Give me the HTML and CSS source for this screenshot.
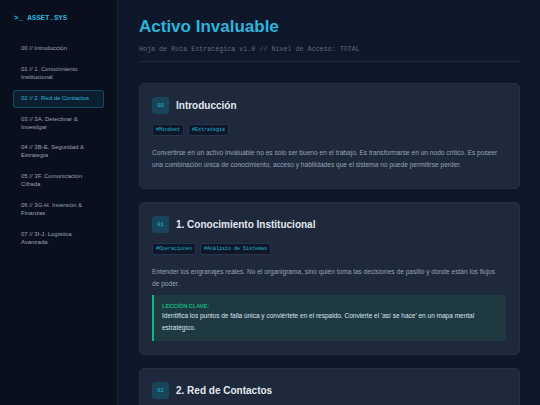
FILE: index.html
```html
<!DOCTYPE html>
<html lang="es">
<head>
<meta charset="utf-8">
<title>Activo Invaluable</title>
<link rel="stylesheet" href="styles.css">
</head>
<body>
<div class="app">
  <aside class="sidebar">
    <div class="logo">&gt;_ ASSET.SYS</div>
    <nav class="nav">
      <a class="nav-item">00 // Introducción</a>
      <a class="nav-item">01 // 1. Conocimiento Institucional</a>
      <a class="nav-item active">02 // 2. Red de Contactos</a>
      <a class="nav-item">03 // 3A. Detectivar &amp; Investigar</a>
      <a class="nav-item">04 // 3B-E. Seguridad &amp; Estrategia</a>
      <a class="nav-item">05 // 3F. Comunicación Cifrada</a>
      <a class="nav-item">06 // 3G-H. Inversión &amp; Finanzas</a>
      <a class="nav-item">07 // 3I-J. Logística Avanzada</a>
    </nav>
  </aside>
  <main class="main">
    <header class="page-header">
      <h1 class="page-title">Activo Invaluable</h1>
      <div class="page-sub">Hoja de Ruta Estratégica v1.0 // Nivel de Acceso: TOTAL</div>
    </header>
    <section class="card">
      <div class="card-head">
        <span class="badge">00</span>
        <h2 class="card-title">Introducción</h2>
      </div>
      <div class="tags">
        <span class="tag">#Mindset</span>
        <span class="tag">#Estrategia</span>
      </div>
      <p class="card-text">Convertirse en un activo invaluable no es solo ser bueno en el trabajo. Es transformarse en un nodo crítico. Es poseer una combinación única de conocimiento, acceso y habilidades que el sistema no puede permitirse perder.</p>
    </section>
    <section class="card">
      <div class="card-head">
        <span class="badge">01</span>
        <h2 class="card-title">1. Conocimiento Institucional</h2>
      </div>
      <div class="tags">
        <span class="tag">#Operaciones</span>
        <span class="tag">#Análisis de Sistemas</span>
      </div>
      <p class="card-text">Entender los engranajes reales. No el organigrama, sino quién toma las decisiones de pasillo y dónde están los flujos de&nbsp;poder.</p>
      <div class="callout">
        <div class="callout-label">LECCIÓN CLAVE:</div>
        <div class="callout-text">Identifica los puntos de falla única y conviértete en el respaldo. Convierte el 'así se hace' en un mapa mental estratégico.</div>
      </div>
    </section>
    <section class="card card-tall">
      <div class="card-head">
        <span class="badge">02</span>
        <h2 class="card-title">2. Red de Contactos</h2>
      </div>
    </section>
  </main>
</div>
</body>
</html>
```

FILE: styles.css
```css
* { box-sizing: border-box; }
html, body {
  margin: 0;
  padding: 0;
  height: 100%;
  overflow: hidden;
}
body {
  background: #0f172a;
  font-family: "Liberation Sans", Arial, sans-serif;
  color: #94a3b8;
}
.app {
  display: flex;
  height: 100vh;
}
.sidebar {
  width: 118px;
  flex-shrink: 0;
  background: #0a0f1e;
  border-right: 1px solid #1a2335;
  padding: 14px 13px;
}
.logo {
  font-family: "Liberation Mono", monospace;
  font-weight: bold;
  font-size: 7.4px;
  line-height: 9px;
  color: #2cb5d9;
  padding-left: 1px;
  margin-bottom: 17px;
}
.nav {
  display: flex;
  flex-direction: column;
  gap: 3px;
}
.nav-item {
  display: block;
  font-size: 6px;
  line-height: 7.9px;
  color: #94a3b8;
  padding: 4px 7px;
  border: 1px solid transparent;
  border-radius: 3px;
}
.nav-item.active {
  color: #2cb5d9;
  background: rgba(34, 180, 220, 0.1);
  border-color: rgba(34, 180, 220, 0.3);
}
.main {
  flex: 1;
  min-width: 0;
  overflow: hidden;
  padding: 16px 20px 0 21px;
}
.page-header {
  border-bottom: 1px solid #1f2a3d;
  padding-bottom: 8px;
  margin-bottom: 21px;
}
.page-title {
  margin: 0;
  font-size: 17px;
  line-height: 22px;
  font-weight: bold;
  color: #2cb5d9;
}
.page-sub {
  margin-top: 7px;
  font-family: "Liberation Mono", monospace;
  font-size: 6.7px;
  line-height: 8px;
  color: #5f6b7e;
}
.card {
  background: #1e293b;
  border: 1px solid #243146;
  border-radius: 5px;
  padding: 13px 9px 13px 12px;
  margin-bottom: 13px;
}
.card-tall {
  min-height: 80px;
}
.card-head {
  display: flex;
  align-items: center;
  gap: 7px;
}
.badge {
  width: 17px;
  height: 17px;
  border-radius: 3px;
  background: #17455a;
  color: #2cb5d9;
  font-family: "Liberation Mono", monospace;
  font-size: 5.5px;
  display: flex;
  align-items: center;
  justify-content: center;
}
.card-title {
  margin: 0;
  font-size: 10px;
  line-height: 12px;
  font-weight: bold;
  color: #e2e8f0;
}
.tags {
  display: flex;
  gap: 4px;
  margin-top: 10px;
}
.tag {
  font-family: "Liberation Mono", monospace;
  font-size: 5px;
  line-height: 6px;
  color: #22b3d0;
  background: #0f172a;
  border: 1px solid #27334a;
  border-radius: 2px;
  padding: 2px 3px;
}
.card-text {
  margin: 11px 0 5px;
  font-size: 6.6px;
  line-height: 11.6px;
  color: #94a3b8;
}
.callout {
  background: #1e3a40;
  border-left: 2px solid #10b981;
  padding: 7px 8px 7px 8px;
  margin-top: 6px;
  margin-right: 4px;
}
.callout-label {
  font-size: 5.6px;
  line-height: 8px;
  font-weight: bold;
  color: #10b981;
}
.callout-text {
  font-size: 6.5px;
  line-height: 12px;
  color: #dbe3ee;
}
```
